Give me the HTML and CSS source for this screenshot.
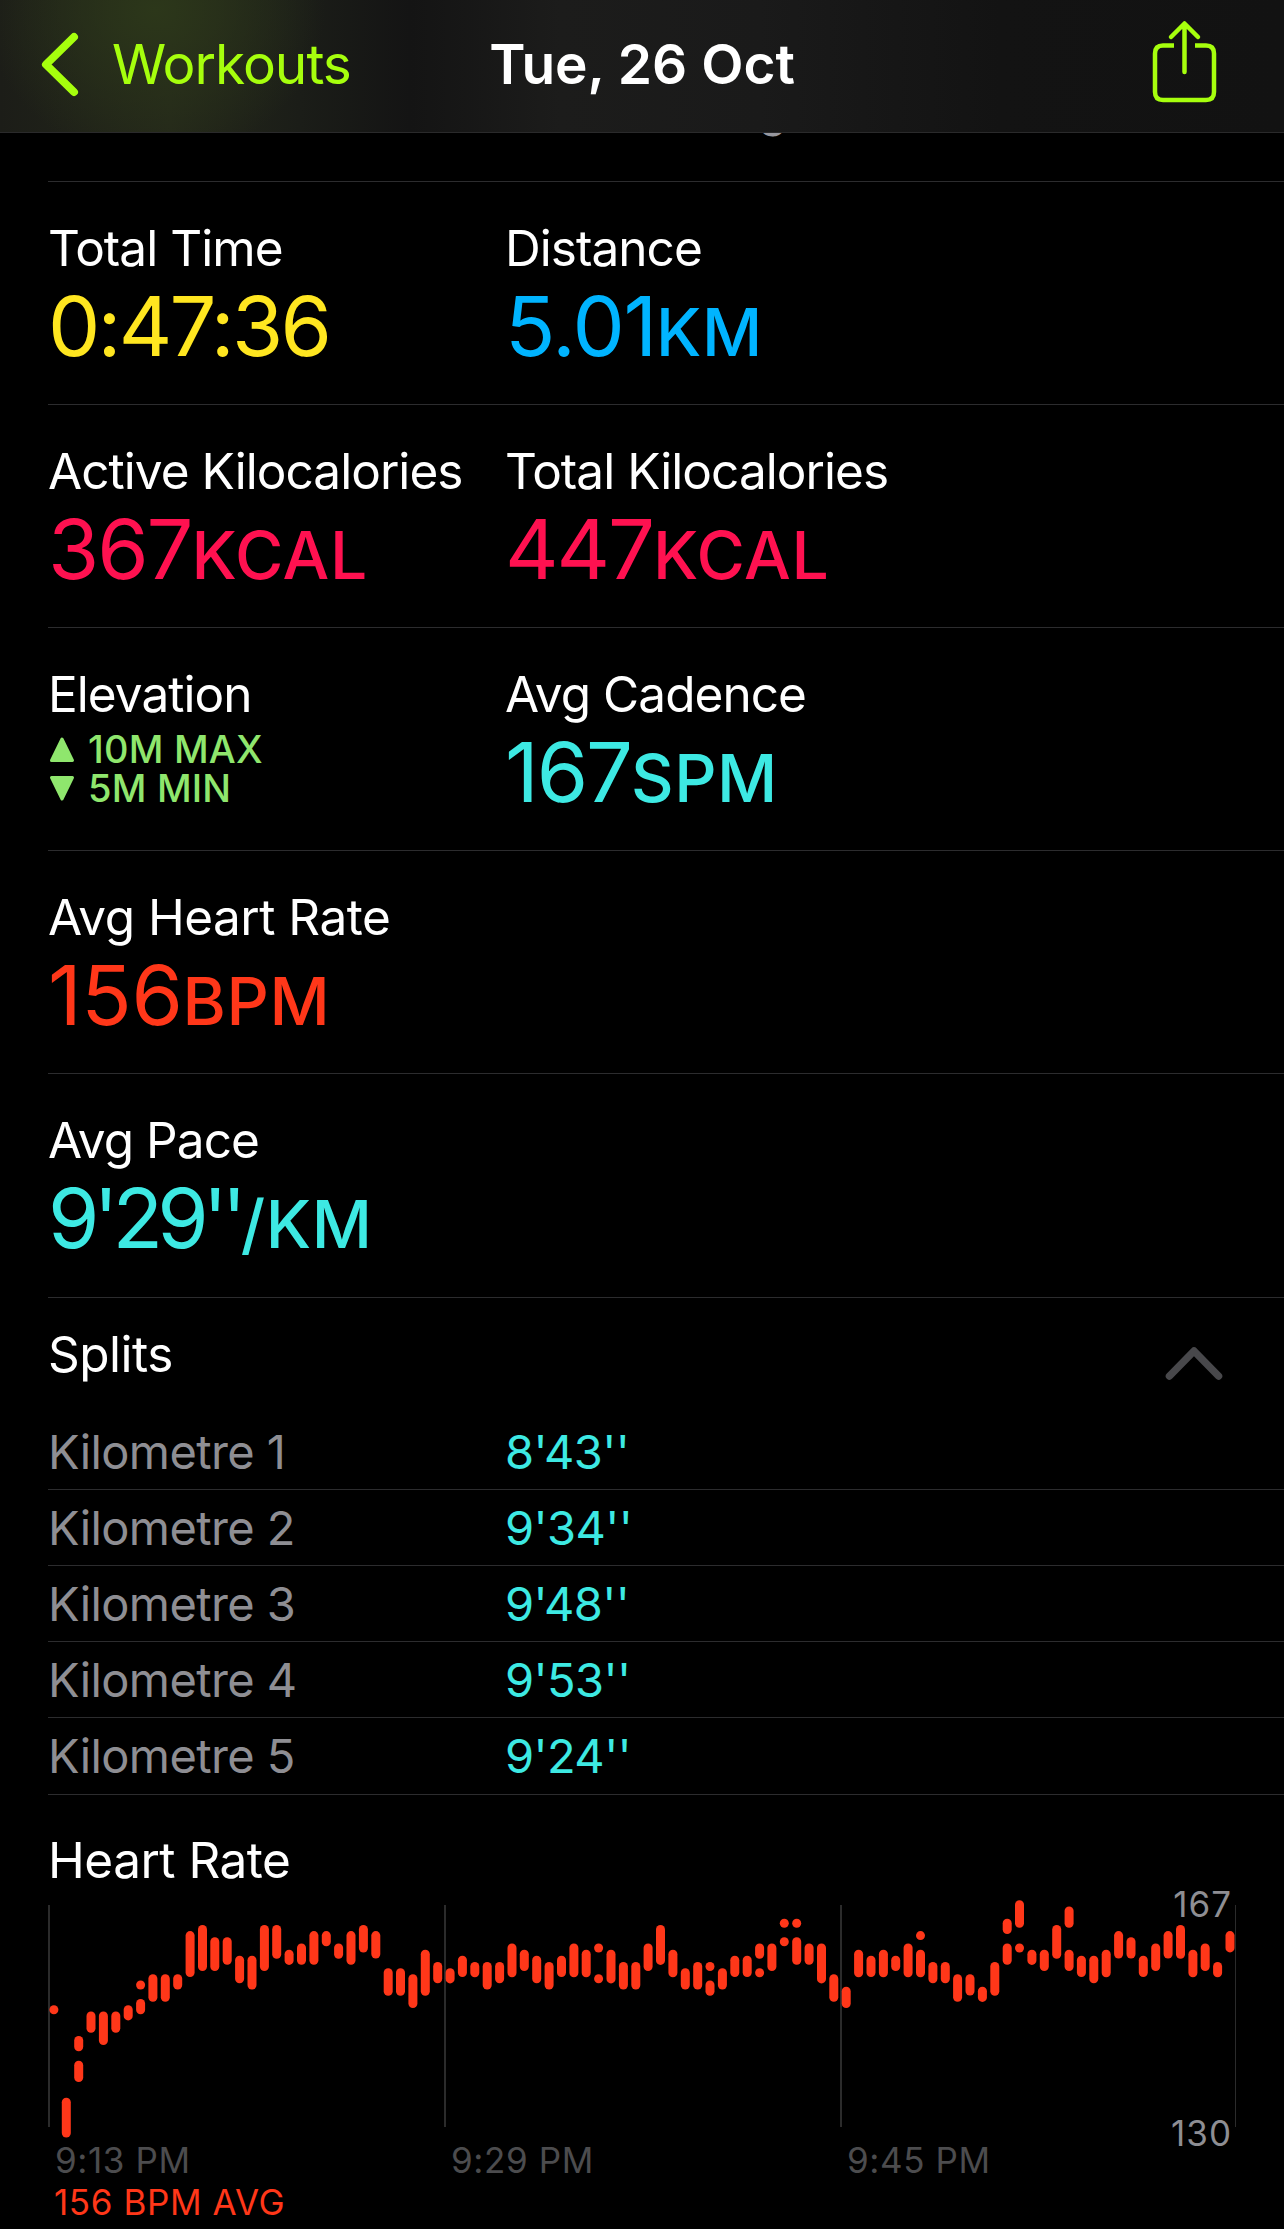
FILE: index.html
```html
<!DOCTYPE html>
<html lang="en">
<head>
  <meta charset="UTF-8" />
  <meta name="viewport" content="width=device-width, initial-scale=1.0" />
  <title>Workout – Tue, 26 Oct</title>
  <link rel="stylesheet" href="styles.css">
</head>
<body>
  <header>
    <a class="back" href="#">
      <svg width="44" height="70" viewBox="0 0 44 70"><path d="M37 8 L9 35.500 L37 63" /></svg>
      <span>Workouts</span>
    </a>
    <h1>Tue, 26 Oct</h1>
    <a class="share" href="#">
      <svg width="70" height="90" viewBox="0 0 70 90">
        <path d="M25 30.500 H14 Q6 30.500 6 38.500 V77 Q6 85 14 85 H57 Q65 85 65 77 V38.500 Q65 30.500 57 30.500 H46" />
        <path class="round" d="M35.500 57 V9 M22 22 L35.500 8.500 L49 22" />
      </svg>
    </a>
  </header>

  <main>
    <div class="place">g</div>

    <section class="row">
      <div class="metric">
        <h2>Total Time</h2>
        <p class="value time">0:47:36</p>
      </div>
      <div class="metric">
        <h2>Distance</h2>
        <p class="value distance">5.01<small>KM</small></p>
      </div>
    </section>

    <section class="row">
      <div class="metric">
        <h2>Active Kilocalories</h2>
        <p class="value energy">367<small>KCAL</small></p>
      </div>
      <div class="metric">
        <h2>Total Kilocalories</h2>
        <p class="value energy">447<small>KCAL</small></p>
      </div>
    </section>

    <section class="row">
      <div class="metric">
        <h2>Elevation</h2>
        <ul class="elevation">
          <li><svg width="26" height="27" viewBox="0 0 26 27"><path d="M13 3 L23.500 24.500 H2.500 Z" /></svg>10M MAX</li>
          <li><svg width="26" height="27" viewBox="0 0 26 27"><path d="M13 24 L23.500 2.500 H2.500 Z" /></svg>5M MIN</li>
        </ul>
      </div>
      <div class="metric">
        <h2>Avg Cadence</h2>
        <p class="value pace">167<small>SPM</small></p>
      </div>
    </section>

    <section class="row">
      <div class="metric">
        <h2 class="wide">Avg Heart Rate</h2>
        <p class="value heart">156<small>BPM</small></p>
      </div>
    </section>

    <section class="row">
      <div class="metric">
        <h2>Avg Pace</h2>
        <p class="value pace"><span class="minutes">9'29''</span><small>/KM</small></p>
      </div>
    </section>

    <section class="splits">
      <div class="splits-head">
        <h2 class="wide">Splits</h2>
        <svg width="62" height="38" viewBox="0 0 62 38"><path d="M6.500 31 L31 6 L55.500 31" /></svg>
      </div>
      <div class="split"><span>Kilometre 1</span><b>8'43''</b></div>
      <div class="split"><span>Kilometre 2</span><b>9'34''</b></div>
      <div class="split"><span>Kilometre 3</span><b>9'48''</b></div>
      <div class="split"><span>Kilometre 4</span><b>9'53''</b></div>
      <div class="split"><span>Kilometre 5</span><b>9'24''</b></div>
    </section>

    <section class="chart">
      <h2 class="wide">Heart Rate</h2>
      <svg id="heart-chart" width="1236" height="334" viewBox="0 0 1236 334">
        <g class="grid">
          <path d="M1 10 V232 M397 10 V232 M793 10 V232" />
          <path class="thin" d="M1187.500 10 V232" />
        </g>
        <g id="bars"></g>
        <text class="limit" x="1184" y="22" text-anchor="end">167</text>
        <text class="limit" x="1184" y="251" text-anchor="end">130</text>
        <text class="tick" x="7" y="278">9:13 PM</text>
        <text class="tick" x="403" y="278">9:29 PM</text>
        <text class="tick" x="799" y="278">9:45 PM</text>
        <text class="average" x="6" y="320">156 BPM AVG</text>
      </svg>
    </section>
  </main>

  <script>
    // one entry per time slot, "high-low" in BPM, several ranges split by a comma
    const samples = [
      '150', '135-130', '145-144,141-139', '149-147', '149-145', '149-147', '150-149', '154,151-150',
      '155-152', '155-152', '155-154', '162-156', '163-157', '161-157', '161-158', '158-155',
      '158-154', '163-157', '163-159', '159-158', '160-158', '162-158', '162-161', '160-159',
      '162-158', '163-160', '162-159', '156-153', '156-153', '155-151', '159-153', '157-155',
      '156-155', '158-156', '157-156', '157-154', '157-155', '160-156', '159-157', '158-155',
      '157-154', '158-156', '160-156', '159-156', '160,155', '159-155', '157-154', '157-154',
      '160-157', '163-158', '159-156', '156-154', '157-154', '157,154-153', '156-154', '158-156',
      '158-156', '160-159,156', '160-157', '164,161', '164,161-158', '160-158', '160-155', '155-152',
      '153-151', '159-156', '158-156', '159-156', '158-157', '160-156', '162,159-156', '157-155',
      '157-155', '155-152', '155-153', '153-152', '157-153', '164-163,160-158', '167-164,160', '159-158',
      '159-157', '163-159', '166-164,159-157', '158-156', '158-155', '159-156', '162-159', '161-159',
      '158-156', '160-157', '162-159', '163-159', '159-156', '160-157', '157-156', '162-160'
    ];

    const max = 167;
    const step = 6.17;
    const bars = document.getElementById('bars');

    samples.forEach((sample, i) => {
      sample.split(',').forEach(range => {
        const [high, low = high] = range.split('-').map(Number);
        const bar = document.createElementNS('http://www.w3.org/2000/svg', 'rect');
        bar.setAttribute('x', (1.4 + i * 12.38).toFixed(1));
        bar.setAttribute('y', (5.3 + (max - high) * step).toFixed(1));
        bar.setAttribute('width', 9);
        bar.setAttribute('height', (9 + (high - low) * step).toFixed(1));
        bar.setAttribute('rx', 4.5);
        bars.appendChild(bar);
      });
    });
  </script>
</body>
</html>
```
FILE: styles.css
```css
body {
  margin: 0;
  height: 2229px;
  overflow: hidden;
  font-family: 'Inter', sans-serif;
  background-color: #000;
  color: #fff;
}

h1, h2, p, ul {
  margin: 0;
  padding: 0;
  font-weight: 400;
}

header {
  position: fixed;
  top: 0;
  width: 100%;
  height: 133px;
  box-sizing: border-box;
  display: grid;
  grid-template-columns: 1fr auto 1fr;
  align-items: center;
  padding: 0 37px 5px;
  background:
    radial-gradient(ellipse 170px 150px at 155px 10px, #2c371a 0%, rgba(44, 55, 26, 0) 100%),
    linear-gradient(90deg, #1c1d18 0, #24281a 170px, #1b1d18 300px, #141414 410px, #1c1c1b 560px, #1a1a1a 760px, #131313 1000px, #121212 100%);
  border-bottom: 1px solid #2a2a2b;
  z-index: 10;
}

header svg {
  fill: none;
  stroke: #a6ff0d;
}

.back {
  display: flex;
  align-items: center;
  gap: 31px;
  color: #a6ff0d;
  font-size: 55px;
  letter-spacing: -1px;
  text-decoration: none;
}

.back svg {
  stroke-width: 8;
  stroke-linecap: round;
  stroke-linejoin: round;
}

h1 {
  font-size: 55px;
  font-weight: 600;
}

.share {
  justify-self: end;
  height: 90px;
  margin: 0 28px 7px 0;
}

.share svg {
  stroke-width: 4.5;
}

.share .round {
  stroke-linecap: round;
  stroke-linejoin: round;
}

main {
  padding-left: 48px;
}

/* location line, scrolled under the header */
.place {
  height: 181px;
  box-sizing: border-box;
  padding: 83px 0 0 711px;
  font-size: 45px;
  line-height: 56px;
  color: #98989f;
}

h2 {
  font-size: 49.5px;
  line-height: 60px;
  letter-spacing: -0.95px;
}

h2.wide {
  letter-spacing: -0.5px;
}

.row {
  display: grid;
  grid-template-columns: 457px 1fr;
  height: 223px;
  box-sizing: border-box;
  padding-top: 36px;
  border-top: 1px solid #2c2c2e;
}

.value {
  margin-top: 8px;
  font-size: 83px;
  line-height: 80px;
  letter-spacing: -2.1px;
  white-space: nowrap;
}

.value small {
  font-size: 66px;
  font-weight: 500;
  letter-spacing: 0.6px;
}

.minutes {
  letter-spacing: -5.9px;
}

.time { color: #ffe620; letter-spacing: -2.8px; }
.distance { color: #00b4ff; letter-spacing: -1.3px; }
.energy { color: #ff1150; }
.pace { color: #3de9e3; }
.heart { color: #ff3719; letter-spacing: -0.4px; }

.elevation {
  margin-top: 6px;
  list-style: none;
  font-size: 38px;
  font-weight: 500;
  line-height: 39px;
  letter-spacing: 0.2px;
  color: #8fe66d;
}

.elevation li {
  display: flex;
  align-items: center;
  gap: 14px;
}

.elevation svg {
  margin-left: 1px;
  margin-right: -1px;
  fill: #8fe66d;
  stroke: #8fe66d;
  stroke-width: 3;
  stroke-linejoin: round;
}

.splits {
  margin-top: 1px;
  border-top: 1px solid #2c2c2e;
}

.splits-head {
  display: flex;
  justify-content: space-between;
  height: 116px;
  box-sizing: border-box;
  padding: 26px 59px 0 0;
}

.splits-head svg {
  margin-top: 21px;
  fill: none;
  stroke: #48484b;
  stroke-width: 7.5;
  stroke-linecap: round;
  stroke-linejoin: round;
}

.split {
  display: grid;
  grid-template-columns: 457px 1fr;
  height: 76px;
  box-sizing: border-box;
  font-size: 47px;
  line-height: 75px;
  letter-spacing: -0.6px;
  color: #8e8e93;
  border-bottom: 1px solid #2c2c2e;
}

.split:last-child {
  height: 77px;
}

.split b {
  font-weight: 400;
  color: #3de9e3;
}

.chart h2 {
  padding-top: 35px;
  height: 65px;
}

.chart svg {
  display: block;
  overflow: visible;
}

.grid path {
  fill: none;
  stroke: #2b2b2b;
  stroke-width: 2;
}

.grid .thin {
  stroke-width: 1;
}

#bars {
  fill: #ff3719;
}

.limit, .tick, .average {
  font-size: 35px;
}

.limit { fill: #8e8e93; letter-spacing: 1px; }
.tick { fill: #4c4c4e; letter-spacing: 0.6px; }
.average { fill: #ff3719; letter-spacing: 0.6px; }
```
